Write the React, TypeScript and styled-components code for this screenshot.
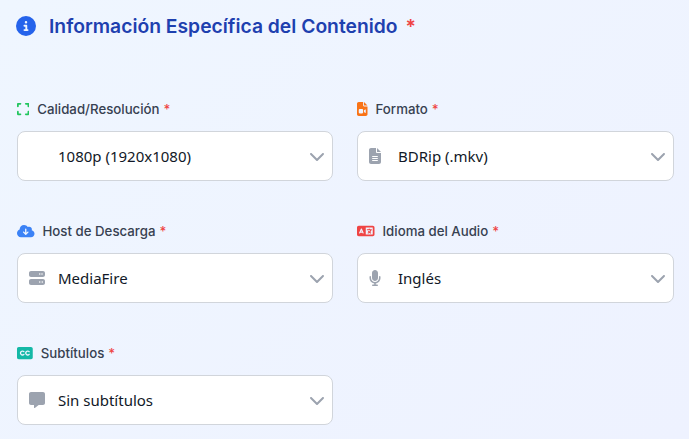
import styled, { createGlobalStyle } from "styled-components";
import type { IconType } from "react-icons";
import {
  FaChevronDown,
  FaCircleInfo,
  FaClosedCaptioning,
  FaCloudArrowDown,
  FaExpand,
  FaFileLines,
  FaFileVideo,
  FaLanguage,
  FaMessage,
  FaMicrophone,
  FaServer,
} from "react-icons/fa6";

const GlobalStyle = createGlobalStyle`
  html, body {
    margin: 0;
    padding: 0;
    background: #eef3ff;
    overflow: hidden;
  }
`;

const Page = styled.div`
  width: 689px;
  height: 439px;
  box-sizing: border-box;
  padding: 14px 15px 0 17px;
  background: linear-gradient(135deg, #eff6ff, #eef2ff);
  font-family: Inter, "Noto Sans", sans-serif;
  overflow: hidden;
`;

const Heading = styled.h2`
  display: flex;
  align-items: center;
  margin: 0 0 62px -1px;
  height: 24px;
  font-size: 19.3px;
  line-height: 24px;
  font-weight: 600;
  color: #1e40af;
`;

const HeadingIcon = styled(FaCircleInfo)`
  width: 20px;
  height: 20px;
  margin-right: 13px;
  color: #2563eb;
`;

const Star = styled.span<{ $gap: number }>`
  color: #ef4444;
  margin-left: ${({ $gap }) => $gap}px;
`;

const Form = styled.div`
  display: grid;
  grid-template-columns: 316px 317px;
  column-gap: 24px;
  row-gap: 41px;
`;

const Field = styled.div`
  display: flex;
  flex-direction: column;
`;

const Label = styled.label`
  display: flex;
  align-items: center;
  box-sizing: border-box;
  height: 20px;
  padding-bottom: 2px;
  margin-bottom: 11px;
  font-size: 13.25px;
  line-height: 18px;
  font-weight: 500;
  color: #374151;
`;

const LabelIcon = styled.span<{ $color: string; $width: number }>`
  display: inline-flex;
  align-items: center;
  margin-right: 8px;
  color: ${({ $color }) => $color};

  svg {
    width: ${({ $width }) => $width}px;
    height: 14px;
  }
`;

const Select = styled.div`
  position: relative;
  display: flex;
  align-items: center;
  box-sizing: border-box;
  height: 50px;
  padding-left: 40px;
  background: #ffffff;
  border: 1px solid #d1d5db;
  border-radius: 8px;
  font-family: "Noto Sans", sans-serif;
  font-size: 15px;
  color: #111827;
`;

const ValueIcon = styled.span<{ $width: number }>`
  position: absolute;
  left: 11px;
  top: 50%;
  transform: translateY(-50%);
  display: flex;
  color: #9ca3af;

  svg {
    width: ${({ $width }) => $width}px;
    height: 16px;
  }
`;

const Chevron = styled(FaChevronDown)`
  position: absolute;
  right: 7px;
  top: 50%;
  transform: translateY(-50%);
  width: 16px;
  height: 16px;
  color: #9ca3af;
`;

type FieldData = {
  label: string;
  Icon: IconType;
  iconWidth: number;
  color: string;
  value: string;
  ValIcon?: IconType;
  valWidth?: number;
};

const fields: FieldData[] = [
  { label: "Calidad/Resolución", Icon: FaExpand, iconWidth: 12.25, color: "#22c55e", value: "1080p (1920x1080)" },
  { label: "Formato", Icon: FaFileVideo, iconWidth: 10.5, color: "#f97316", value: "BDRip (.mkv)", ValIcon: FaFileLines, valWidth: 12 },
  { label: "Host de Descarga", Icon: FaCloudArrowDown, iconWidth: 17.5, color: "#3b82f6", value: "MediaFire", ValIcon: FaServer, valWidth: 16 },
  { label: "Idioma del Audio", Icon: FaLanguage, iconWidth: 17.5, color: "#ef4444", value: "Inglés", ValIcon: FaMicrophone, valWidth: 12 },
  { label: "Subtítulos", Icon: FaClosedCaptioning, iconWidth: 15.75, color: "#14b8a6", value: "Sin subtítulos", ValIcon: FaMessage, valWidth: 16 },
];

export default function App() {
  return (
    <Page>
      <GlobalStyle />
      <Heading>
        <HeadingIcon />
        Información Específica del Contenido
        <Star $gap={8}>*</Star>
      </Heading>
      <Form>
        {fields.map(({ label, Icon, iconWidth, color, value, ValIcon, valWidth }) => (
          <Field key={label}>
            <Label>
              <LabelIcon $color={color} $width={iconWidth}>
                <Icon />
              </LabelIcon>
              {label}
              <Star $gap={4}>*</Star>
            </Label>
            <Select>
              {ValIcon && (
                <ValueIcon $width={valWidth ?? 16}>
                  <ValIcon />
                </ValueIcon>
              )}
              {value}
              <Chevron />
            </Select>
          </Field>
        ))}
      </Form>
    </Page>
  );
}
